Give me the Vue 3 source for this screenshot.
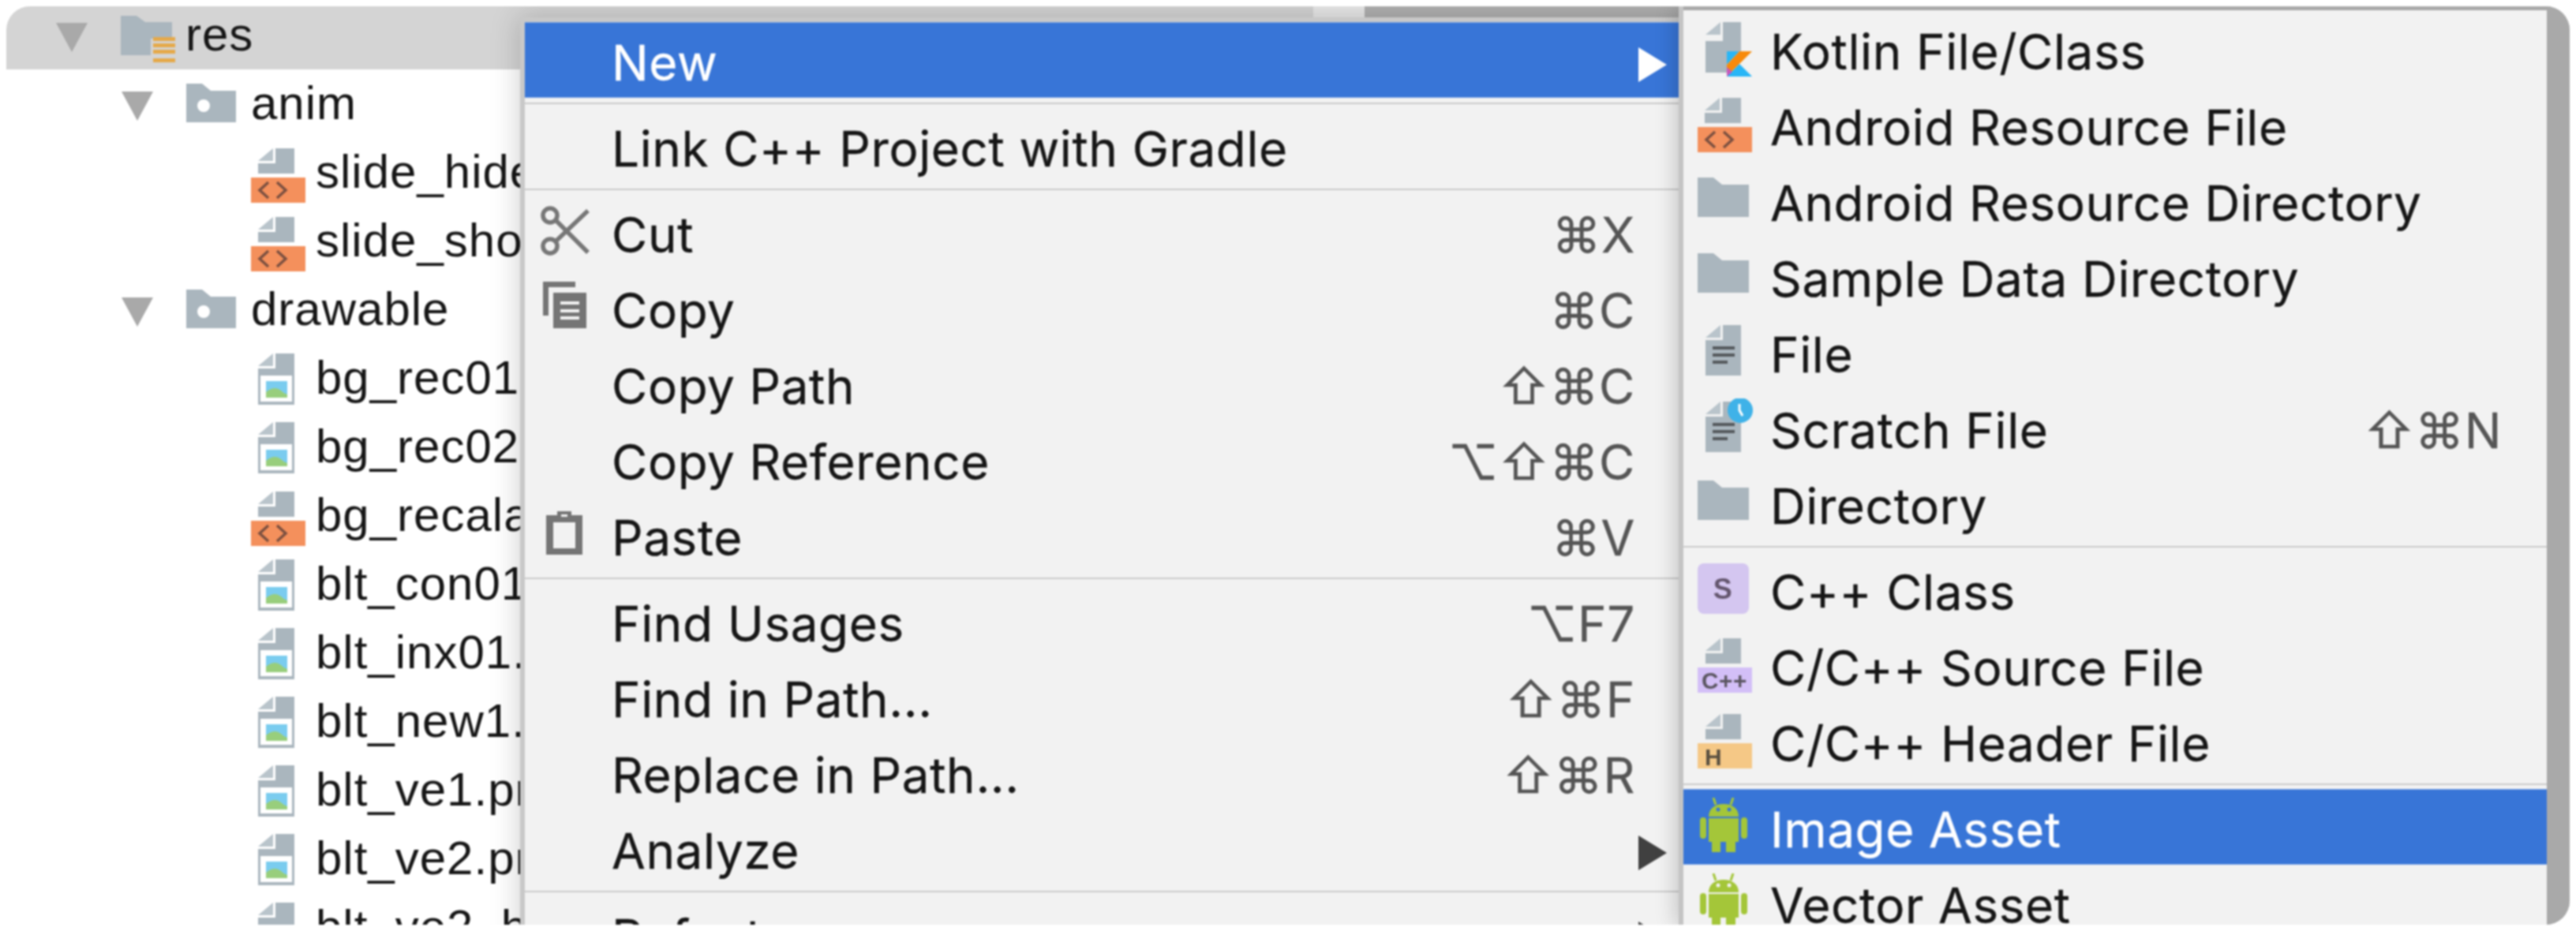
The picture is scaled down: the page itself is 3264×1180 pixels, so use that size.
<script setup>
// project tree behind the menus
const treeRows = [
  { label: 'res', level: 'lvl0', arrow: true, icon: 'res', selected: true },
  { label: 'anim', level: 'lvl1', arrow: true, icon: 'folder-dot' },
  { label: 'slide_hide.xml', level: 'lvl2', icon: 'xml' },
  { label: 'slide_show.xml', level: 'lvl2', icon: 'xml' },
  { label: 'drawable', level: 'lvl1', arrow: true, icon: 'folder-dot' },
  { label: 'bg_rec01.png', level: 'lvl2', icon: 'png' },
  { label: 'bg_rec02.png', level: 'lvl2', icon: 'png' },
  { label: 'bg_recalaa.xml', level: 'lvl2', icon: 'xml' },
  { label: 'blt_con01.png', level: 'lvl2', icon: 'png' },
  { label: 'blt_inx01.png', level: 'lvl2', icon: 'png' },
  { label: 'blt_new1.png', level: 'lvl2', icon: 'png' },
  { label: 'blt_ve1.png', level: 'lvl2', icon: 'png' },
  { label: 'blt_ve2.png', level: 'lvl2', icon: 'png' },
  { label: 'blt_ve2_h.png', level: 'lvl2', icon: 'png' },
]

// main context menu, sep = separator line
const mainMenu = [
  { label: 'New', sub: true, active: true },
  { sep: true },
  { label: 'Link C++ Project with Gradle' },
  { sep: true },
  { label: 'Cut', icon: 'cut', keys: '⌘X' },
  { label: 'Copy', icon: 'copy', keys: '⌘C' },
  { label: 'Copy Path', keys: '⇧⌘C' },
  { label: 'Copy Reference', keys: '⌥⇧⌘C' },
  { label: 'Paste', icon: 'paste', keys: '⌘V' },
  { sep: true },
  { label: 'Find Usages', keys: '⌥F7' },
  { label: 'Find in Path...', keys: '⇧⌘F' },
  { label: 'Replace in Path...', keys: '⇧⌘R' },
  { label: 'Analyze', sub: true },
  { sep: true },
  { label: 'Refactor', sub: true },
]

const newMenu = [
  { label: 'Kotlin File/Class', icon: 'kotlin' },
  { label: 'Android Resource File', icon: 'xml' },
  { label: 'Android Resource Directory', icon: 'folder' },
  { label: 'Sample Data Directory', icon: 'folder' },
  { label: 'File', icon: 'file' },
  { label: 'Scratch File', icon: 'scratch', keys: '⇧⌘N' },
  { label: 'Directory', icon: 'folder' },
  { sep: true },
  { label: 'C++ Class', icon: 'cpp-class' },
  { label: 'C/C++ Source File', icon: 'cpp-source' },
  { label: 'C/C++ Header File', icon: 'cpp-header' },
  { sep: true },
  { label: 'Image Asset', icon: 'android', active: true },
  { label: 'Vector Asset', icon: 'android' },
]
</script>

<template>
  <!-- icon sprite -->
  <svg class="sprite" xmlns="http://www.w3.org/2000/svg">
    <symbol id="ic-folder" viewBox="0 0 72 72">
      <path d="M0 8H20L31 17H65V58H0Z" fill="#aab6be" />
    </symbol>
    <symbol id="ic-folder-dot" viewBox="0 0 72 72">
      <path d="M0 8H20L31 17H63V57H0Z" fill="#aab6be" />
      <circle cx="22" cy="36" r="8" fill="#fff" />
    </symbol>
    <symbol id="ic-res" viewBox="0 0 72 72">
      <path d="M0 9H20L31 17H65V38H38V59H0Z" fill="#aab6be" />
      <path d="M41 36h28v5H41zM41 44h28v5H41zM41 52h28v5H41zM41 63h28v5H41z" fill="#e5a94a" />
    </symbol>
    <symbol id="ic-xml" viewBox="0 0 72 72">
      <path d="M31 3H55V35H9V22H31Z" fill="#aab6be" />
      <path d="M28 3L9 19H28Z" fill="#b9c4cb" />
      <rect x="0" y="40" width="69" height="32" fill="#f4905c" />
      <path d="M22 46L11 56L22 66M33 46L44 56L33 66" fill="none" stroke="#7b5040" stroke-width="3.5" />
    </symbol>
    <symbol id="ic-png" viewBox="0 0 72 72">
      <path d="M31 2H55V67H9V21H31Z" fill="#aab6be" />
      <path d="M28 2L9 18H28Z" fill="#b9c4cb" />
      <rect x="12" y="30" width="40" height="33" fill="#fff" />
      <rect x="19" y="37" width="27" height="21" fill="#7accef" />
      <path d="M19 58V51Q30 42 38 49Q42 53 46 54V58Z" fill="#98ce7c" />
    </symbol>
    <symbol id="ic-file" viewBox="0 0 72 72">
      <path d="M32 3H55V67H10V22H32Z" fill="#aab6be" />
      <path d="M29 3L10 19H29Z" fill="#b9c4cb" />
      <path d="M19 30h28v4H19zM19 39h28v4H19zM19 48h19v4H19z" fill="#55595d" />
    </symbol>
    <symbol id="ic-scratch" viewBox="0 0 72 72">
      <path d="M32 4H55V68H10V23H32Z" fill="#aab6be" />
      <path d="M29 4L10 20H29Z" fill="#b9c4cb" />
      <path d="M19 31h28v4H19zM19 40h28v4H19zM19 49h19v4H19z" fill="#55595d" />
      <circle cx="54" cy="15" r="16" fill="#3fb2e8" />
      <path d="M53 7V15L57 22" fill="none" stroke="#fff" stroke-width="3" />
    </symbol>
    <symbol id="ic-kotlin" viewBox="0 0 72 72">
      <path d="M32 3H55V40H37V67H10V27H32Z" fill="#aab6be" />
      <path d="M29 3L10 19H29Z" fill="#b9c4cb" />
      <path d="M37 40H53L37 57Z" fill="#29b6f6" />
      <path d="M53 40H69L37 72V57Z" fill="#f88a0a" />
      <path d="M53 56L69 72H37Z" fill="#29b6f6" />
      <path d="M37 72V60L44 66Z" fill="#c757bc" />
    </symbol>
    <symbol id="ic-cpp-class" viewBox="0 0 72 72">
      <rect x="0" y="4" width="65" height="64" rx="8" fill="#d4c6f0" />
      <text x="32" y="49" text-anchor="middle" class="glyph" font-size="36" fill="#64566e">S</text>
    </symbol>
    <symbol id="ic-cpp-source" viewBox="0 0 72 72">
      <path d="M32 3H55V35H10V22H32Z" fill="#aab6be" />
      <path d="M29 3L10 19H29Z" fill="#b9c4cb" />
      <rect x="0" y="40" width="69" height="32" fill="#d3bff7" />
      <text x="34" y="67" text-anchor="middle" class="glyph" font-size="29" textLength="58" lengthAdjust="spacingAndGlyphs" fill="#5a5560">C++</text>
    </symbol>
    <symbol id="ic-cpp-header" viewBox="0 0 72 72">
      <path d="M32 3H55V35H10V22H32Z" fill="#aab6be" />
      <path d="M29 3L10 19H29Z" fill="#b9c4cb" />
      <rect x="0" y="40" width="69" height="32" fill="#f5c886" />
      <text x="9" y="68" class="glyph" font-size="30" fill="#5a5040">H</text>
    </symbol>
    <symbol id="ic-android" viewBox="0 0 72 72">
      <path d="M20 0L23 9M45 0L42 9" stroke="#a4c639" stroke-width="3" />
      <path d="M14 24C14 14 22 8 33 8C44 8 52 14 52 24Z" fill="#a4c639" />
      <path d="M14 26H52V56H48V69H36V56H29V69H18V56H14Z" fill="#a4c639" />
      <rect x="3" y="25" width="8" height="27" rx="4" fill="#a4c639" />
      <rect x="55" y="25" width="8" height="27" rx="4" fill="#a4c639" />
      <circle cx="26" cy="15" r="2.5" fill="currentColor" />
      <circle cx="40" cy="15" r="2.5" fill="currentColor" />
    </symbol>
    <symbol id="ic-cut" viewBox="0 0 72 72">
      <circle cx="21" cy="16" r="9" fill="none" stroke="#777" stroke-width="5.5" />
      <circle cx="21" cy="55" r="9" fill="none" stroke="#777" stroke-width="5.5" />
      <path d="M29 23L69 63M29 48L69 10" fill="none" stroke="#777" stroke-width="5.5" />
    </symbol>
    <symbol id="ic-copy" viewBox="0 0 72 72">
      <path d="M12 4H53V11H19V47H12Z" fill="#757575" />
      <rect x="25" y="18" width="42" height="45" fill="#757575" />
      <path d="M34 29h24v4H34zM34 39h24v4H34zM34 48h24v4H34z" fill="#f2f2f2" />
    </symbol>
    <symbol id="ic-paste" viewBox="0 0 72 72">
      <path d="M16 12H30V7H48V12H62V62H16ZM25 21V54H53V21Z" fill="#757575" fill-rule="evenodd" />
      <rect x="35" y="11" width="8" height="3" fill="#f2f2f2" />
    </symbol>
  </svg>

  <div class="frame">
    <!-- project tree -->
    <div class="tree">
      <div
        v-for="row in treeRows"
        :key="row.label"
        class="tree-row"
        :class="[row.level, { selected: row.selected }]"
      >
        <i v-if="row.arrow" class="tri"></i>
        <svg class="tree-icon"><use :href="'#ic-' + row.icon" /></svg>
        <span class="tree-label">{{ row.label }}</span>
      </div>
    </div>

    <!-- strip over the selected row, above the menu -->
    <div class="top-strip"></div>

    <!-- context menu -->
    <div class="menu main-menu">
      <template v-for="(item, i) in mainMenu" :key="i">
        <div v-if="item.sep" class="sep"></div>
        <div v-else class="row" :class="{ active: item.active }">
          <svg class="menu-icon"><use v-if="item.icon" :href="'#ic-' + item.icon" /></svg>
          <span class="label">{{ item.label }}</span>
          <span v-if="item.keys" class="keys">{{ item.keys }}</span>
          <i v-if="item.sub" class="sub-arrow"></i>
        </div>
      </template>
    </div>

    <!-- New submenu -->
    <div class="sub-shade">
      <div class="menu new-menu">
        <template v-for="(item, i) in newMenu" :key="i">
          <div v-if="item.sep" class="sep"></div>
          <div v-else class="row" :class="{ active: item.active }">
            <svg class="menu-icon"><use :href="'#ic-' + item.icon" /></svg>
            <span class="label">{{ item.label }}</span>
            <span v-if="item.keys" class="keys">{{ item.keys }}</span>
          </div>
        </template>
      </div>
    </div>
  </div>
</template>

<style>
html,
body {
  background: #fff;
}
.glyph {
  font-family: "Liberation Sans", sans-serif;
  font-weight: 700;
}
</style>

<style scoped>
.sprite {
  display: none;
}

.frame {
  position: relative;
  width: 3248px;
  height: 1164px;
  margin: 8px;
  overflow: hidden;
  border-radius: 30px;
  background: #fff;
  filter: blur(0.9px);
}

/* Tree */
.tree {
  margin-top: -7px;
}
.tree-row {
  display: flex;
  align-items: center;
  height: 87px;
  white-space: nowrap;
  font-family: "Liberation Sans", sans-serif;
  font-size: 60px;
  letter-spacing: 1px;
  color: #161616;
}
.tree-row.selected {
  background: #d4d4d4;
}
.lvl0 {
  padding-left: 63px;
}
.lvl1 {
  padding-left: 146px;
}
.lvl2 {
  padding-left: 310px;
}
.tri {
  flex: none;
  width: 0;
  height: 0;
  margin: 5px 42px 0 0;
  border-left: 20px solid transparent;
  border-right: 20px solid transparent;
  border-top: 37px solid #a9a9a9;
}
.tree-icon {
  flex: none;
  width: 72px;
  height: 72px;
  margin: 5px 10px 0 0;
  overflow: visible;
}
.tree-label {
  margin-top: -2px;
}

.top-strip {
  position: absolute;
  top: 0;
  left: 1656px;
  width: 466px;
  height: 16px;
  background: linear-gradient(to right, #e8e8e8 0 65px, #b0b0b0 65px);
}

/* Menus */
.menu {
  background: #f2f2f2;
  font-family: Inter, "DejaVu Sans", sans-serif;
  font-size: 62px;
  letter-spacing: 0.6px;
  color: #161616;
  -webkit-text-stroke: 0.3px currentColor;
  white-space: nowrap;
}
.main-menu {
  position: absolute;
  top: 20px;
  left: 657px;
  width: 1463px;
  box-shadow: 0 0 0 6px #c8c8c8, 0 0 34px 8px rgba(0, 0, 0, 0.18);
}
.sub-shade {
  position: absolute;
  top: 0;
  bottom: 0;
  left: 2119px;
  right: 0;
  padding: 5px 29px 0 0;
  border-left: 6px solid #c4c4c4;
  background: #a9a9a9;
  box-shadow: 0 0 26px 2px rgba(0, 0, 0, 0.22);
}
.new-menu {
  height: 100%;
  padding-top: 1px;
}

.row {
  display: flex;
  align-items: center;
  height: 96px;
  padding: 0 16px 0 11px;
}
.row.active {
  background: #3875d7;
  color: #fff;
  box-shadow: inset 0 1px 0 #76a0e4, inset 0 -1px 0 #76a0e4;
}
.new-menu .row {
  padding: 0 57px 0 18px;
}
.menu-icon {
  flex: none;
  width: 72px;
  height: 72px;
  margin: -2px 27px 0 0;
  overflow: visible;
  color: #f2f2f2;
}
.row.active .menu-icon {
  color: #3875d7;
}
.new-menu .menu-icon {
  margin-right: 20px;
}
.label {
  margin-top: 7px;
}
.keys {
  margin: 7px 40px 0 auto;
  color: #555;
}
.new-menu .keys {
  margin-right: 0;
}
.sub-arrow {
  flex: none;
  width: 0;
  height: 0;
  margin-left: auto;
  border-top: 22px solid transparent;
  border-bottom: 22px solid transparent;
  border-left: 36px solid #404040;
  transform: translateY(6px);
}
.row.active .sub-arrow {
  border-left-color: #fff;
}
.sep {
  height: 2px;
  margin: 6px 0 5px;
  background: #cbcbcb;
}
</style>
